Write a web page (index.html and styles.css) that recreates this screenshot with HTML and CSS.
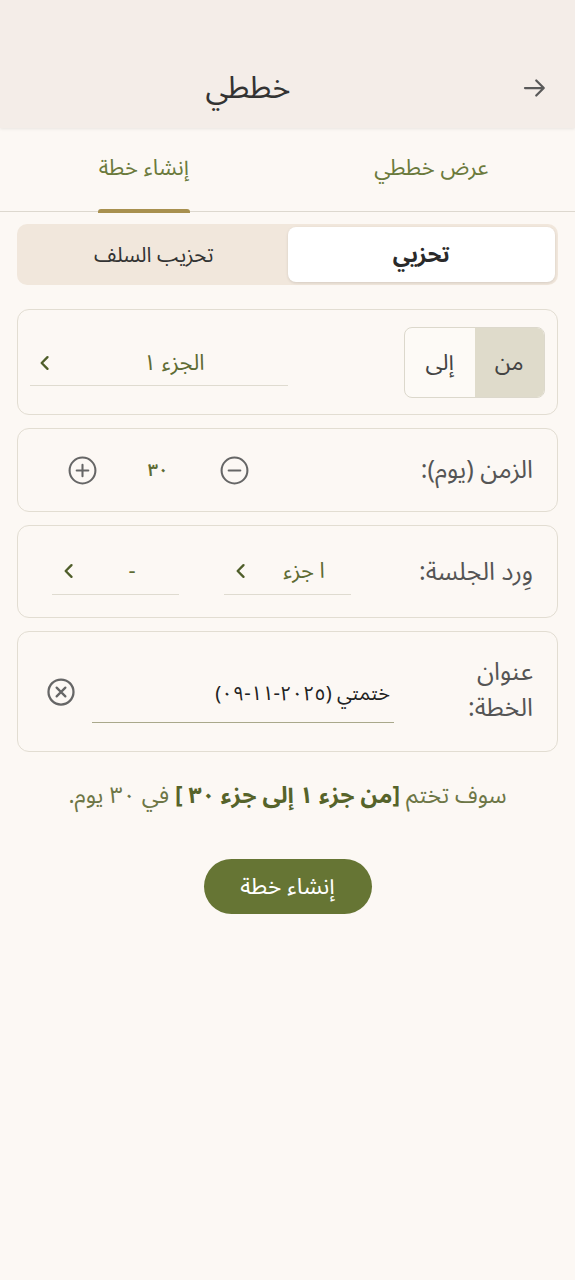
FILE: index.html
```html
<!DOCTYPE html>
<html lang="ar" dir="rtl">
<head>
    <meta charset="UTF-8">
    <meta name="viewport" content="width=device-width, initial-scale=1.0">
    <title>خططي</title>
    <link rel="stylesheet" href="styles.css">
</head>
<body>
    <header class="topbar">
        <div class="topbar-row">
            <button class="back">
                <svg width="30" height="30" viewBox="0 0 24 24"><path d="M4 12h15M13 6l6 6-6 6" fill="none" stroke="#5a5a5a" stroke-width="1.8" stroke-linecap="round" stroke-linejoin="round"/></svg>
            </button>
            <h1 class="title">خططي</h1>
        </div>
    </header>

    <nav class="tabs">
        <div class="tab">عرض خططي</div>
        <div class="tab active">إنشاء خطة</div>
    </nav>

    <main class="content">
        <div class="segment">
            <div class="seg-item selected">تحزيي</div>
            <div class="seg-item">تحزيب السلف</div>
        </div>

        <section class="card card-range">
            <div class="toggle">
                <div class="toggle-item on">من</div>
                <div class="toggle-item">إلى</div>
            </div>
            <div class="dropdown wide">
                <span class="dd-text">الجزء ١</span>
                <span class="dd-chev">
                    <svg width="20" height="20" viewBox="0 0 24 24"><path d="M15 5l-7 7 7 7" fill="none" stroke="#4f5e2a" stroke-width="2.8" stroke-linecap="round" stroke-linejoin="round"/></svg>
                </span>
            </div>
        </section>

        <section class="card card-days">
            <div class="label">الزمن (يوم):</div>
            <div class="stepper">
                <button class="round">
                    <svg width="31" height="31" viewBox="0 0 24 24"><circle cx="12" cy="12" r="10" fill="none" stroke="#666" stroke-width="1.6"/><path d="M7.5 12h9" stroke="#666" stroke-width="1.6" stroke-linecap="round"/></svg>
                </button>
                <span class="count">٣٠</span>
                <button class="round">
                    <svg width="31" height="31" viewBox="0 0 24 24"><circle cx="12" cy="12" r="10" fill="none" stroke="#666" stroke-width="1.6"/><path d="M7.5 12h9M12 7.5v9" stroke="#666" stroke-width="1.6" stroke-linecap="round"/></svg>
                </button>
            </div>
        </section>

        <section class="card card-session">
            <div class="label">وِرد الجلسة:</div>
            <div class="pair">
                <div class="dropdown small">
                    <span class="dd-text">ا جزء</span>
                    <span class="dd-chev">
                        <svg width="20" height="20" viewBox="0 0 24 24"><path d="M15 5l-7 7 7 7" fill="none" stroke="#4f5e2a" stroke-width="2.8" stroke-linecap="round" stroke-linejoin="round"/></svg>
                    </span>
                </div>
                <div class="dropdown small">
                    <span class="dd-text">-</span>
                    <span class="dd-chev">
                        <svg width="20" height="20" viewBox="0 0 24 24"><path d="M15 5l-7 7 7 7" fill="none" stroke="#4f5e2a" stroke-width="2.8" stroke-linecap="round" stroke-linejoin="round"/></svg>
                    </span>
                </div>
            </div>
        </section>

        <section class="card card-title">
            <div class="label narrow">عنوان الخطة:</div>
            <div class="field">
                <div class="field-input">ختمتي (٢٠٢٥-١١-٠٩)</div>
            </div>
            <button class="round clear">
                <svg width="30" height="30" viewBox="0 0 24 24"><circle cx="12" cy="12" r="10" fill="none" stroke="#666" stroke-width="1.8"/><path d="M8.5 8.5l7 7M15.5 8.5l-7 7" stroke="#666" stroke-width="1.8" stroke-linecap="round"/></svg>
            </button>
        </section>

        <p class="summary">سوف تختم <b>[من جزء ١ إلى جزء ٣٠ ]</b> في ٣٠ يوم.</p>

        <div class="actions">
            <button class="primary">إنشاء خطة</button>
        </div>
    </main>
</body>
</html>
```

FILE: styles.css
```css
* {
    margin: 0;
    padding: 0;
    box-sizing: border-box;
}

body {
    font-family: "Noto Sans Arabic", "Noto Sans", "DejaVu Sans", sans-serif;
    background-color: #fcf8f4;
    color: #3a3a3a;
    width: 575px;
    min-height: 1280px;
}

button {
    font-family: inherit;
    border: none;
    background: none;
    cursor: pointer;
}

/* header */
.topbar {
    height: 128px;
    padding-top: 64px;
    background-color: #f4ede8;
    box-shadow: 0 1px 3px rgba(0, 0, 0, 0.08);
    position: relative;
}

.topbar-row {
    display: grid;
    grid-template-columns: 48px 1fr;
    column-gap: 31px;
    align-items: center;
    height: 48px;
    padding: 0 16px;
}

.back {
    display: flex;
    align-items: center;
    justify-content: center;
    height: 48px;
}

.title {
    text-align: center;
    font-size: 31px;
    line-height: 48px;
    font-weight: 400;
    color: #333;
}

/* tabs */
.tabs {
    display: flex;
    height: 84px;
    border-bottom: 1.5px solid #ddd8cf;
}

.tab {
    flex: 1;
    display: flex;
    align-items: center;
    justify-content: center;
    font-size: 22px;
    color: #6b7a3c;
    position: relative;
    padding-bottom: 3px;
}

.tab.active::after {
    content: "";
    position: absolute;
    bottom: -1.5px;
    left: 50%;
    width: 92px;
    margin-left: -46px;
    height: 4px;
    border-radius: 3px 3px 0 0;
    background-color: #a8904f;
}

/* content */
.content {
    padding: 12px 17px 0;
}

.segment {
    display: flex;
    height: 61px;
    padding: 3px;
    border-radius: 10px;
    background-color: #f1e7dc;
}

.seg-item {
    flex: 1;
    display: flex;
    align-items: center;
    justify-content: center;
    font-size: 21px;
    color: #333;
    border-radius: 8px;
}

.seg-item.selected {
    background-color: #fff;
    font-size: 22px;
    font-weight: 700;
    color: #2a2a2a;
    box-shadow: 0 1px 3px rgba(0, 0, 0, 0.12);
}

.card {
    display: flex;
    align-items: center;
    justify-content: space-between;
    border: 1.5px solid #e2ddd2;
    border-radius: 12px;
    margin-top: 13px;
}

.card-range {
    margin-top: 24px;
    height: 106px;
    padding: 0 12px 0 12px;
}

.card-days {
    height: 84px;
    padding: 0 24px 0 42px;
}

.card-session {
    height: 93px;
    padding: 0 24px 0 34px;
}

.card-title {
    height: 121px;
    padding: 0 24px 0 28px;
}

.label {
    font-size: 25px;
    color: #555;
}

.label.narrow {
    width: 100px;
    line-height: 36px;
    margin-top: -4px;
}

/* from / to toggle */
.toggle {
    display: flex;
    width: 141px;
    height: 71px;
    border: 1.5px solid #dcd8cc;
    border-radius: 8px;
    overflow: hidden;
    background-color: #fdfaf6;
}

.toggle-item {
    flex: 1;
    display: flex;
    align-items: center;
    justify-content: center;
    font-size: 23px;
    color: #444;
}

.toggle-item.on {
    background-color: #dfdbcb;
}

/* dropdowns */
.dropdown {
    display: flex;
    align-items: center;
    height: 46px;
    border-bottom: 1.5px solid #dfdbd0;
}

.dropdown.wide {
    width: 258px;
    margin-top: 2px;
}

.dropdown.small {
    width: 127px;
}

.dd-text {
    flex: 1;
    text-align: center;
    font-size: 22px;
    color: #5e6b33;
}

.dd-chev {
    width: 33px;
    display: flex;
    justify-content: center;
}

.dropdown.wide .dd-chev {
    width: 30px;
}

.pair {
    display: flex;
    gap: 45px;
}

/* stepper */
.stepper {
    display: flex;
    align-items: center;
}

.round {
    width: 44px;
    height: 44px;
    display: flex;
    align-items: center;
    justify-content: center;
}

.count {
    width: 108px;
    text-align: center;
    font-size: 18px;
    font-weight: 600;
    color: #5e6b33;
}

/* title field */
.field {
    flex: 1;
    margin: 0 39px 0 16px;
    padding-top: 12px;
}

.field-input {
    height: 50px;
    font-size: 20px;
    color: #222;
    border-bottom: 1.5px solid #a9a88b;
    padding-right: 4px;
}

.clear {
    width: 30px;
    height: 30px;
}

.summary {
    margin-top: 28px;
    text-align: center;
    font-size: 23px;
    line-height: 32px;
    color: #6d7646;
}

.summary b {
    color: #56632a;
}

.actions {
    display: flex;
    justify-content: center;
    margin-top: 47px;
}

.primary {
    width: 168px;
    height: 55px;
    border-radius: 28px;
    background-color: #667534;
    color: #fff;
    font-size: 23px;
}
```
